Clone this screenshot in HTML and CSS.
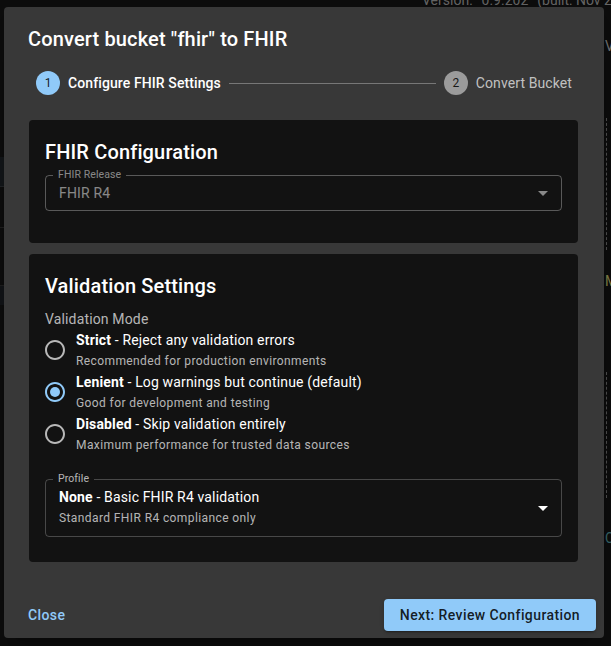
FILE: index.html
```html
<!DOCTYPE html>
<html lang="en">
<head>
<meta charset="utf-8">
<title>Convert bucket to FHIR</title>
<link rel="stylesheet" href="styles.css">
</head>
<body>
<div class="page" aria-hidden="true">
  <div class="version"><span>Version:</span><span class="v-num">0.9.202</span><span class="v-built">(built: Nov 20, 2024)</span></div>
  <div class="edge-left">
    <div class="band band-a"></div>
    <div class="band band-b"></div>
    <div class="band band-c"></div>
  </div>
  <div class="edge-right">
    <span class="er-v">V</span>
    <span class="er-dash er-dash-a"></span>
    <span class="er-me">Me</span>
    <span class="er-dash er-dash-b"></span>
    <span class="er-cu">Cu</span>
  </div>
</div>

<div class="dialog" role="dialog" aria-labelledby="dlg-title">
  <h2 class="dialog-title" id="dlg-title">Convert bucket "fhir" to FHIR</h2>
  <div class="dialog-content">
    <div class="stepper">
      <div class="step">
        <span class="step-icon step-icon-active">1</span>
        <span class="step-label step-label-active">Configure FHIR Settings</span>
      </div>
      <div class="connector"></div>
      <div class="step">
        <span class="step-icon">2</span>
        <span class="step-label">Convert Bucket</span>
      </div>
    </div>

    <section class="card card-fhir">
      <h3 class="card-title">FHIR Configuration</h3>
      <div class="select select-disabled">
        <span class="float-label">FHIR Release</span>
        <div class="select-value">FHIR R4</div>
        <svg class="arrow" viewBox="0 0 24 24" width="24" height="24"><path d="M7 10l5 5 5-5z"/></svg>
      </div>
    </section>

    <section class="card card-validation">
      <h3 class="card-title">Validation Settings</h3>
      <div class="form-label">Validation Mode</div>
      <div class="radio-group">
        <label class="radio-row">
          <span class="radio">
            <svg viewBox="0 0 24 24" width="24" height="24"><path d="M12 2C6.48 2 2 6.48 2 12s4.48 10 10 10 10-4.48 10-10S17.52 2 12 2zm0 18c-4.42 0-8-3.58-8-8s3.58-8 8-8 8 3.58 8 8-3.58 8-8 8z"/></svg>
          </span>
          <span class="radio-text">
            <span class="radio-primary"><b>Strict</b> - Reject any validation errors</span>
            <span class="radio-secondary">Recommended for production environments</span>
          </span>
        </label>
        <label class="radio-row">
          <span class="radio radio-checked">
            <svg viewBox="0 0 24 24" width="24" height="24"><path d="M12 2C6.48 2 2 6.48 2 12s4.48 10 10 10 10-4.48 10-10S17.52 2 12 2zm0 18c-4.42 0-8-3.58-8-8s3.58-8 8-8 8 3.58 8 8-3.58 8-8 8z"/><circle cx="12" cy="12" r="5"/></svg>
          </span>
          <span class="radio-text">
            <span class="radio-primary"><b>Lenient</b> - Log warnings but continue (default)</span>
            <span class="radio-secondary">Good for development and testing</span>
          </span>
        </label>
        <label class="radio-row">
          <span class="radio">
            <svg viewBox="0 0 24 24" width="24" height="24"><path d="M12 2C6.48 2 2 6.48 2 12s4.48 10 10 10 10-4.48 10-10S17.52 2 12 2zm0 18c-4.42 0-8-3.58-8-8s3.58-8 8-8 8 3.58 8 8-3.58 8-8 8z"/></svg>
          </span>
          <span class="radio-text">
            <span class="radio-primary"><b>Disabled</b> - Skip validation entirely</span>
            <span class="radio-secondary">Maximum performance for trusted data sources</span>
          </span>
        </label>
      </div>

      <div class="select select-profile">
        <span class="float-label">Profile</span>
        <div class="select-value">
          <span class="radio-primary"><b>None</b> - Basic FHIR R4 validation</span>
          <span class="radio-secondary">Standard FHIR R4 compliance only</span>
        </div>
        <svg class="arrow" viewBox="0 0 24 24" width="24" height="24"><path d="M7 10l5 5 5-5z"/></svg>
      </div>
    </section>
  </div>
  <div class="dialog-actions">
    <button class="btn-text" type="button">Close</button>
    <button class="btn-contained" type="button">Next: Review Configuration</button>
  </div>
</div>
</body>
</html>
```

FILE: styles.css
```css
* { box-sizing: border-box; }

html, body {
  margin: 0;
  padding: 0;
}

body {
  width: 611px;
  height: 646px;
  overflow: hidden;
  position: relative;
  background: #0e0e0e;
  font-family: Roboto, "Noto Sans", "Liberation Sans", sans-serif;
  color: #fff;
}

/* ---- page glimpsed behind the modal backdrop ---- */
.page {
  position: absolute;
  inset: 0;
}

.version {
  position: absolute;
  top: -8px;
  left: 422px;
  font-size: 14px;
  line-height: 16px;
  color: #6a6a6a;
  white-space: nowrap;
}
.v-num { margin-left: 9px; }
.v-built { margin-left: 9px; }

.edge-left {
  position: absolute;
  left: 0;
  top: 0;
  width: 4px;
  height: 646px;
}
.band { position: absolute; left: 0; width: 4px; }
.band-a { top: 157px; height: 30px; background: #15181b; border-bottom: 1px solid #24272a; }
.band-b { top: 227px; height: 20px; border-top: 1px solid #222; }
.band-c { top: 285px; height: 20px; background: #141619; border-top: 1px solid #222; }

.edge-right {
  position: absolute;
  left: 604px;
  top: 0;
  width: 7px;
  height: 646px;
}
.er-v, .er-me, .er-cu {
  position: absolute;
  left: 1px;
  font-size: 14px;
  line-height: 16px;
  white-space: nowrap;
}
.er-v { top: 38px; color: #7a7a7a; }
.er-me { top: 273px; color: #8a8a4e; }
.er-cu { top: 530px; color: #3d6f73; }
.er-dash {
  position: absolute;
  left: 2px;
  width: 0;
  border-left: 1px dashed #555;
}
.er-dash-a { top: 118px; height: 132px; }
.er-dash-b { top: 372px; height: 126px; }

/* ---- dialog ---- */
.dialog {
  position: absolute;
  left: 4px;
  top: 7px;
  width: 600px;
  height: 631px;
  background: #383838;
  border-radius: 4px;
  box-shadow: 0 11px 15px -7px rgba(0,0,0,.2), 0 24px 38px 3px rgba(0,0,0,.14), 0 9px 46px 8px rgba(0,0,0,.12);
  display: flex;
  flex-direction: column;
}

.dialog-title {
  margin: 0;
  padding: 16px 24px;
  font-size: 20px;
  font-weight: 500;
  line-height: 32px;
  letter-spacing: 0.15px;
  color: #fff;
}

.dialog-content {
  flex: 1;
  padding: 0 24px;
}

/* stepper */
.stepper {
  display: flex;
  align-items: center;
  height: 24px;
}
.step {
  display: flex;
  align-items: center;
  padding: 0 8px;
}
.step-icon {
  width: 24px;
  height: 24px;
  border-radius: 50%;
  background: #9b9b9b;
  color: rgba(0,0,0,.87);
  font-size: 12px;
  display: flex;
  align-items: center;
  justify-content: center;
}
.step-icon-active { background: #90caf9; }
.step-label {
  margin-left: 8px;
  font-size: 14px;
  line-height: 20px;
  color: rgba(255,255,255,.7);
  letter-spacing: 0.1px;
}
.step-label-active {
  color: #fff;
  font-weight: 500;
}
.connector {
  flex: 1;
  border-top: 1px solid #777;
}

/* cards */
.card {
  background: #121212;
  border-radius: 4px;
  margin: 0 2px 0 1px;
  padding: 16px;
}
.card-fhir { margin-top: 25px; }
.card-validation {
  margin-top: 11px;
  padding-bottom: 25px;
}

.card-title {
  margin: 0;
  font-size: 20px;
  font-weight: 500;
  line-height: 32px;
  letter-spacing: 0.15px;
  color: #fff;
}

/* selects */
.select {
  position: relative;
  border: 1px solid rgba(255,255,255,.23);
  border-radius: 4px;
  display: flex;
  align-items: center;
}
.select-disabled {
  margin-top: 7px;
  margin-bottom: 16px;
  height: 36px;
  border-color: rgba(255,255,255,.3);
}
.select-profile {
  margin-top: 24px;
  height: 58px;
  align-items: flex-start;
}

.float-label {
  position: absolute;
  left: 7px;
  top: -7px;
  padding: 0 5px;
  background: #121212;
  font-size: 10.5px;
  line-height: 12px;
  letter-spacing: 0.1px;
  color: rgba(255,255,255,.7);
}
.select-disabled .float-label { color: rgba(255,255,255,.5); }

.select-value {
  flex: 1;
  padding: 0 13px;
  font-size: 14px;
  line-height: 20px;
  letter-spacing: 0.15px;
}
.select-disabled .select-value { color: rgba(255,255,255,.5); }
.select-profile .select-value {
  display: flex;
  flex-direction: column;
  padding-top: 7px;
}

.arrow {
  position: absolute;
  right: 6px;
  top: 50%;
  margin-top: -12px;
  fill: #fff;
}
.select-disabled .arrow { fill: rgba(255,255,255,.5); }

/* radios */
.form-label {
  margin-top: 7px;
  font-size: 14px;
  line-height: 20px;
  letter-spacing: 0.15px;
  color: rgba(255,255,255,.7);
}

.radio-group {
  display: flex;
  flex-direction: column;
}
.radio-row {
  display: flex;
  align-items: center;
  margin-left: -11px;
}
.radio {
  width: 42px;
  height: 42px;
  padding: 9px;
  flex: none;
  fill: rgba(255,255,255,.7);
}
.radio svg { display: block; }
.radio-checked { fill: #90caf9; }

.radio-text {
  display: flex;
  flex-direction: column;
}
.radio-primary {
  font-size: 14px;
  line-height: 20px;
  letter-spacing: 0.15px;
  color: #fff;
}
.radio-primary b { font-weight: 700; }
.radio-secondary {
  margin-top: 1px;
  font-size: 12px;
  line-height: 20px;
  letter-spacing: 0.4px;
  color: rgba(255,255,255,.7);
}

/* actions */
.dialog-actions {
  display: flex;
  justify-content: space-between;
  align-items: center;
  padding: 8px 8px 7px 16px;
}
.btn-text, .btn-contained {
  font-family: inherit;
  font-size: 14px;
  font-weight: 500;
  line-height: 20px;
  letter-spacing: 0.4px;
  border: 0;
  border-radius: 4px;
  cursor: pointer;
}
.btn-text {
  background: transparent;
  color: #90caf9;
  padding: 6px 8px;
}
.btn-contained {
  background: #90caf9;
  color: rgba(0,0,0,.87);
  padding: 6px 16px;
  box-shadow: 0 3px 1px -2px rgba(0,0,0,.2), 0 2px 2px 0 rgba(0,0,0,.14), 0 1px 5px 0 rgba(0,0,0,.12);
}
```
